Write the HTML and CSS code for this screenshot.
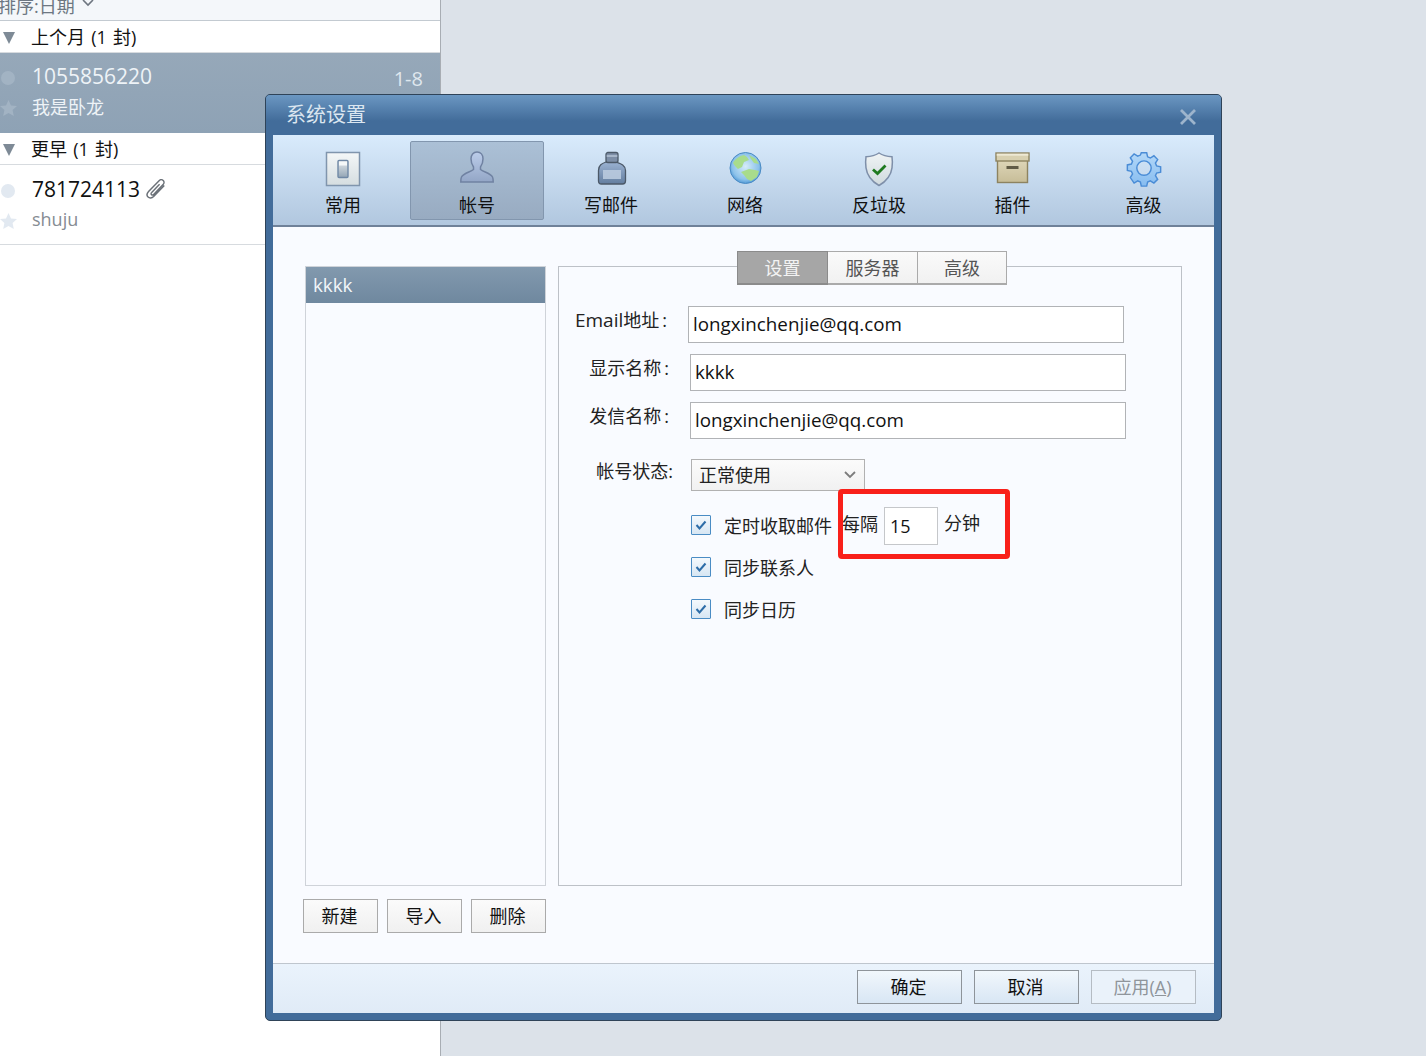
FILE: index.html
```html
<!DOCTYPE html>
<html lang="zh-CN">
<head>
<meta charset="utf-8">
<title>系统设置</title>
<link rel="stylesheet" href="styles.css">
</head>
<body>
<aside class="mail-list">
  <div class="sort-bar"><span class="sort-label">排序:日期</span><svg class="sort-chev" width="12" height="8" viewBox="0 0 12 8"><path d="M1 1l5 5 5-5" fill="none" stroke="#6e7680" stroke-width="1.6"/></svg></div>
  <div class="group"><span class="tri"></span><span>上个月 (1 封)</span></div>
  <div class="mail selected">
    <div class="mail-top"><span class="dot"></span><span class="mail-name">1055856220</span><span class="mail-date">1-8</span></div>
    <div class="mail-sub"><svg class="star" width="17" height="16" viewBox="0 0 17 16"><path d="M8.5 0l2.5 5.4 6 .7-4.400 4 1.200 5.900-5.300-3-5.300 3 1.200-5.900L0 6.100l6-.7z"/></svg><span>我是卧龙</span></div>
  </div>
  <div class="group early"><span class="tri"></span><span>更早 (1 封)</span></div>
  <div class="mail last">
    <div class="mail-top"><span class="dot"></span><span class="mail-name">781724113</span>
      <svg class="clip" width="20" height="20" viewBox="2 1.200 15.300 16.500"><path d="M16.500 6.500l-8.800 9.200c-1.500 1.500-3.500 1.500-4.600.4s-1-3 .4-4.500l8.700-9c1-1 2.500-1 3.400-.1s.9 2.300-.1 3.300l-7.800 8.100c-.6.6-1.300.6-1.800.2s-.4-1.200.2-1.800l6.500-6.800" fill="none" stroke="#6b7178" stroke-width="1.200"/></svg>
    </div>
    <div class="mail-sub"><svg class="star" width="17" height="16" viewBox="0 0 17 16"><path d="M8.500 0l2.500 5.400 6 .7-4.400 4 1.200 5.900-5.300-3-5.300 3 1.200-5.900L0 6.100l6-.7z"/></svg><span>shuju</span></div>
  </div>
</aside>

<section class="dialog">
  <header class="title-bar">
    <span class="title">系统设置</span>
    <svg class="close" width="18" height="18" viewBox="0 0 18 18"><path d="M2 2l14 14M16 2L2 16" stroke="#9db4cc" stroke-width="2.800" fill="none"/></svg>
  </header>
  <div class="dialog-body">
    <nav class="toolbar">
      <div class="tool">
        <svg width="36" height="36" viewBox="0 0 36 36"><defs><linearGradient id="g1" x1="0" y1="0" x2="0" y2="1"><stop offset="0" stop-color="#f4f7f8"/><stop offset="1" stop-color="#d5dde0"/></linearGradient><linearGradient id="g2" x1="0" y1="0" x2="0" y2="1"><stop offset="0" stop-color="#e4e9ec"/><stop offset="1" stop-color="#93a5b5"/></linearGradient></defs><rect x="1.500" y="1.500" width="33" height="33" fill="url(#g1)" stroke="#8095ad" stroke-width="1.500"/><rect x="13" y="9.500" width="10" height="17" rx="1" fill="url(#g2)" stroke="#6f88a5" stroke-width="1.400"/><rect x="14" y="10.500" width="8" height="4" fill="#f5f8f9"/></svg>
        <span>常用</span>
      </div>
      <div class="tool active">
        <svg width="36" height="36" viewBox="0 0 36 36"><defs><linearGradient id="g3" x1="0" y1="0" x2="0" y2="1"><stop offset="0" stop-color="#bccdea"/><stop offset="1" stop-color="#93a6c6"/></linearGradient></defs><path d="M18 1c3.800 0 6 3 6 6.800 0 3.500-1 6.200-2.500 8.200v2.500c3 2.500 10 3.500 12 7.500 .5 1 .7 3 .7 5H1.800c0-2 .2-4 .7-5 2-4 9-5 12-7.500V16c-1.500-2-2.500-4.700-2.500-8.200C12 4 14.200 1 18 1z" fill="url(#g3)" stroke="#7082a2" stroke-width="1.500"/></svg>
        <span>帐号</span>
      </div>
      <div class="tool">
        <svg width="36" height="36" viewBox="0 0 36 36"><defs><linearGradient id="g4" x1="0" y1="0" x2="0" y2="1"><stop offset="0" stop-color="#9bb2d2"/><stop offset="1" stop-color="#647e9f"/></linearGradient></defs><path d="M13 11h10c4 1.500 9.500 3 9.500 8.500V30c0 2-1 3-3 3H8.500c-2 0-3-1-3-3V19.500C5.500 14 9 12.500 13 11z" fill="url(#g4)" stroke="#4c5968" stroke-width="1.300"/><rect x="10" y="19" width="18" height="9" fill="#b9cade" opacity=".9"/><rect x="13" y="1.500" width="12" height="10" rx="2" fill="#7d8ea6" stroke="#4c5968" stroke-width="1.300"/><rect x="13.700" y="4" width="10.600" height="2" fill="#a7b6c9"/></svg>
        <span>写邮件</span>
      </div>
      <div class="tool">
        <svg width="36" height="36" viewBox="0 0 36 36"><defs><radialGradient id="g5" cx=".5" cy=".45" r=".6"><stop offset="0" stop-color="#d5ecfa"/><stop offset=".7" stop-color="#8dc2ea"/><stop offset="1" stop-color="#3c8bd0"/></radialGradient></defs><circle cx="18.500" cy="17" r="15.500" fill="url(#g5)" stroke="#4a8bc4" stroke-width="1"/><path d="M6 12c2-4 6-7 11-8l3 2 2 3-5 2-2 5-4 2-3-3zM22 4l7 4 3 5-5-1-3-4zM14 21l8-3 6 1 4 1-2 6-6 4-4-2-3-4z" fill="#a8dc8c"/></svg>
        <span>网络</span>
      </div>
      <div class="tool">
        <svg width="36" height="36" viewBox="0 0 36 36"><defs><linearGradient id="g6" x1="0" y1="0" x2="0" y2="1"><stop offset="0" stop-color="#f0f4f5"/><stop offset="1" stop-color="#cfd9dd"/></linearGradient></defs><path d="M18 2c3 2 7 3.500 13 3.800 .5 3 .5 7 0 11C30 24.500 24 31 18 34.500 12 31 6 24.500 5 16.800c-.5-4-.5-8 0-11C11 5.500 15 4 18 2z" fill="url(#g6)" stroke="#7e8fa9" stroke-width="1.500"/><path d="M12 18.500l4.500 4 8-8" fill="none" stroke="#1f7a1f" stroke-width="2.800"/></svg>
        <span>反垃圾</span>
      </div>
      <div class="tool tool-six">
        <svg width="36" height="36" viewBox="0 0 36 36"><defs><linearGradient id="g7" x1="0" y1="0" x2="0" y2="1"><stop offset="0" stop-color="#ded6b8"/><stop offset="1" stop-color="#c7bd98"/></linearGradient></defs><rect x="2.500" y="9" width="30" height="22.500" fill="url(#g7)" stroke="#8d8360" stroke-width="1.400"/><rect x="1" y="2" width="33" height="8" fill="#d8d0b0" stroke="#8d8360" stroke-width="1.400"/><rect x="1.700" y="2.700" width="31.600" height="2" fill="#eee9d4"/><rect x="11.500" y="15" width="12" height="3" fill="#615b45"/></svg>
        <span>插件</span>
      </div>
      <div class="tool tool-last">
        <svg width="36" height="36" viewBox="0 0 36 36"><defs><linearGradient id="g8" x1="0" y1="0" x2="0" y2="1"><stop offset="0" stop-color="#b4d8f8"/><stop offset="1" stop-color="#86bcf0"/></linearGradient></defs><path fill-rule="evenodd" d="M15 1h6l1 4.500 3 1.300 4-2.500 4.200 4.200-2.500 4 1.300 3 4.500 1v6l-4.500 1-1.300 3 2.500 4-4.200 4.200-4-2.500-3 1.300-1 4.500h-6l-1-4.500-3-1.300-4 2.500L2.800 28.500l2.500-4-1.300-3-4.500-1v-6l4.500-1 1.300-3-2.500-4L7 2.300l4 2.500 3-1.300zM18 10a8 8 0 1 0 0 16 8 8 0 0 0 0-16z" transform="translate(1.800 .9) scale(.9)" fill="url(#g8)" stroke="#4a8cd6" stroke-width="1.600"/></svg>
        <span>高级</span>
      </div>
    </nav>

    <div class="content">
      <div class="account-col">
        <div class="account-list"><div class="account-item">kkkk</div></div>
        <div class="account-actions">
          <button class="btn" type="button">新建</button>
          <button class="btn" type="button">导入</button>
          <button class="btn" type="button">删除</button>
        </div>
      </div>
      <div class="settings-pane">
        <div class="tabs">
          <div class="tab on">设置</div>
          <div class="tab mid">服务器</div>
          <div class="tab end">高级</div>
        </div>
        <div class="field f-email"><label><span class="lat">Email</span>地址<span class="colon">:</span></label><input class="text" value="longxinchenjie@qq.com" readonly></div>
        <div class="field f-name"><label>显示名称<span class="colon">:</span></label><input class="text" value="kkkk" readonly></div>
        <div class="field f-name"><label>发信名称<span class="colon">:</span></label><input class="text" value="longxinchenjie@qq.com" readonly></div>
        <div class="field f-state"><label>帐号状态:</label>
          <div class="select"><span>正常使用</span><svg width="12" height="8" viewBox="0 0 12 8"><path d="M1 1l5 5 5-5" fill="none" stroke="#7c7c7c" stroke-width="1.800"/></svg></div>
        </div>
        <div class="check first">
          <span class="box"><svg width="16" height="16" viewBox="0 0 16 16"><path d="M3.500 8l3 3.500 6-7" fill="none" stroke="#2d6da8" stroke-width="2"/></svg></span>
          <span class="check-text">定时收取邮件</span><span class="every">每隔</span><input class="mins" value="15" readonly><span class="unit">分钟</span>
        </div>
        <div class="check">
          <span class="box"><svg width="16" height="16" viewBox="0 0 16 16"><path d="M3.500 8l3 3.500 6-7" fill="none" stroke="#2d6da8" stroke-width="2"/></svg></span>
          <span class="check-text">同步联系人</span>
        </div>
        <div class="check">
          <span class="box"><svg width="16" height="16" viewBox="0 0 16 16"><path d="M3.500 8l3 3.500 6-7" fill="none" stroke="#2d6da8" stroke-width="2"/></svg></span>
          <span class="check-text">同步日历</span>
        </div>
        <div class="highlight"></div>
      </div>
    </div>

    <footer class="footer">
      <button class="fbtn" type="button">确定</button>
      <button class="fbtn" type="button">取消</button>
      <button class="fbtn off" type="button">应用(<u>A</u>)</button>
    </footer>
  </div>
</section>
</body>
</html>
```
FILE: styles.css
```css
* { box-sizing: border-box; }
html, body { margin: 0; height: 100%; }
body {
  background: #dce2e9;
  font-family: "Open Sans", "Noto Sans CJK SC", sans-serif;
  font-size: 18px;
  color: #111;
  overflow: hidden;
  position: relative;
  height: 1056px;
}
.mail-list {
  width: 441px;
  height: 1056px;
  background: #fff;
  border-right: 1px solid #a8adb3;
  overflow: hidden;
}
.sort-bar {
  height: 21px;
  background: #f4f7fa;
  border-bottom: 1px solid #c3cad1;
  display: flex;
  align-items: flex-end;
  color: #6d7782;
  font-size: 18px;
  line-height: 24px;
  overflow: hidden;
}
.sort-label { margin-left: -2px; white-space: nowrap; margin-bottom: 2px; }
.sort-chev { margin: 0 0 13px 7px; }
.group {
  height: 32px;
  display: flex;
  align-items: center;
  padding-bottom: 2px;
  border-bottom: 1px solid #d7dbdf;
  font-size: 18px;
  word-spacing: 1.500px;
}
.tri {
  width: 0; height: 0;
  margin: 4px 16px 0 3px;
  border-left: 6.500px solid transparent;
  border-right: 6.500px solid transparent;
  border-top: 12px solid #7e8a96;
}
.mail { height: 80px; padding-top: 7px; }
.mail.selected { background: linear-gradient(#96a8b9, #8ea2b5); color: #eef3f7; }
.mail.last { padding-top: 8px; border-bottom: 1px solid #d7dbdf; }
.mail-top { display: flex; align-items: center; height: 32px; }
.dot {
  width: 14px; height: 14px;
  margin: 4px 17px 0 1px;
  border-radius: 50%;
  background: #e2e9f1;
}
.selected .dot { background: #a2b3c3; }
.mail-name { font-size: 21px; }
.mail-date { margin-left: auto; margin-right: 17px; font-size: 20px; color: #dfe7ee; padding-top: 5px; }
.clip { margin-left: 6px; }
.mail-sub { display: flex; align-items: center; height: 30px; margin-top: -1px; }
.star { margin: 4px 15px 0 0; fill: #e2e9f1; flex: none; }
.selected .star { fill: #a2b3c3; }
.last .mail-sub { color: #868c93; }

.dialog {
  position: absolute;
  left: 265px; top: 94px;
  width: 957px; height: 927px;
  background: #426c9a;
  border: 1px solid #2f4358;
  border-radius: 5px;
  display: flex;
  flex-direction: column;
  padding: 0 7px 7px;
}
.title-bar {
  height: 40px;
  margin: 0 -7px;
  padding: 0 24px 0 20px;
  background: linear-gradient(#6b97c2 0, #426c9a 65%);
  border-radius: 4px 4px 0 0;
  display: flex;
  align-items: center;
  justify-content: space-between;
}
.title { color: #dbe6f0; font-size: 20px; margin-top: -4px; }
.close { margin-top: 4px; }
.dialog-body { flex: 1; display: flex; flex-direction: column; background: #f9fbff; min-height: 0; }
.toolbar {
  height: 92px;
  padding: 6px 3px 0;
  display: flex;
  background: linear-gradient(#d9ebfc, #b1c7df);
  border-bottom: 2px solid #6f8199;
  flex: none;
}
.tool {
  width: 134px;
  height: 79px;
  display: flex;
  flex-direction: column;
  align-items: center;
  padding-top: 9px;
  gap: 6px;
  line-height: 24px;
  border: 1px solid transparent;
  border-radius: 2px;
  font-size: 18px;
}
.tool-six { width: 133px; }
.tool-last { width: 129px; }
.tool svg { display: block; }
.tool.active { background: linear-gradient(#abc0d6, #98abc1); border-color: #8296ae; }
.content { flex: 1; display: flex; padding: 39px 32px 0 30px; gap: 12px; min-height: 0; }
.account-col { width: 243px; display: flex; flex-direction: column; }
.account-list {
  height: 620px;
  margin-left: 2px;
  background: #f9fbff;
  border: 1px solid #cfd3d9;
}
.account-item {
  height: 36px;
  background: linear-gradient(#8299ae, #6f889f);
  color: #f2f6f9;
  padding-left: 7px;
  line-height: 36px;
  font-size: 18.800px;
}
.account-actions { display: flex; gap: 9px; margin-top: 13px; }
.btn {
  width: 75px; height: 34px;
  padding: 0 2px 2px 0;
  background: linear-gradient(#fbfbfb, #f0f0f0);
  border: 1px solid #aaa;
  font: inherit;
  color: #111;
}
.settings-pane {
  flex: 1;
  height: 620px;
  position: relative;
  border: 1px solid #bdc1c7;
}
.tabs {
  display: flex;
  width: 270px;
  height: 34px;
  margin: -16px 0 0 178px;
  position: relative;
}
.tab {
  width: 90px;
  background: linear-gradient(#fafafa, #f1f1f1);
  border: 1px solid #aaa;
  border-left: 0;
  border-bottom: 2px solid #aaa;
  text-align: center;
  color: #555;
  line-height: 32px;
  font-size: 18px;
}
.tab.on { width: 91px; background: #a6a6a6; color: #f3f3f3; border: 1px solid #8b8b8b; border-bottom: 2px solid #8b8b8b; }
.tab.end { width: 89px; }
.field { display: flex; align-items: flex-start; color: #222; }
.field label { white-space: nowrap; text-align: right; line-height: 28px; }
.lat { font-size: 19px; }
.colon { margin-left: 3px; }
.text {
  width: 436px; height: 37px;
  padding: 0 4px 2px;
  background: #fff;
  border: 1px solid #b1b3b6;
  font: inherit;
  font-size: 18.800px;
  color: #111;
  outline: 0;
}
.f-email { margin-top: 21px; }
.f-email label { width: 108px; margin-right: 21px; }
.f-name { margin-top: 11px; }
.f-name label { width: 110px; margin-right: 21px; }
.f-state { margin-top: 20px; }
.f-state label { width: 114px; margin: -2px 18px 0 0; }
.select {
  width: 174px; height: 32px;
  padding: 0 8px 2px 7px;
  display: flex;
  align-items: center;
  justify-content: space-between;
  background: linear-gradient(#fbfbfb, #f1f1f1);
  border: 1px solid #b1b1b1;
}
.select svg { margin-top: 2px; }
.check { display: flex; align-items: center; height: 42px; margin-left: 132px; color: #222; }
.check.first { margin-top: 13px; }
.box {
  width: 20px; height: 20px;
  margin-right: 13px;
  display: flex;
  align-items: center;
  justify-content: center;
  background: linear-gradient(#f4f9fd, #d7e6f3);
  border: 1px solid #4a8cc4;
  border-radius: 1px;
}
.every { margin-left: 10px; margin-top: -4px; }
.mins {
  width: 54px; height: 38px;
  margin: 2px 0 0 6px;
  padding: 0 5px;
  background: #fff;
  border: 1px solid #c5c7ca;
  font: inherit;
  color: #111;
  outline: 0;
}
.unit { margin-left: 6px; margin-top: -6px; }
.highlight {
  position: absolute;
  left: 279px; top: 222px;
  width: 172px; height: 70px;
  border: 5px solid #f9201a;
  border-radius: 4px;
}
.footer {
  height: 50px;
  flex: none;
  display: flex;
  justify-content: flex-end;
  gap: 12px;
  padding: 6px 18px 0 0;
  background: linear-gradient(#eaf3fc, #e0ebf7);
  border-top: 1px solid #bfc6ce;
}
.fbtn {
  width: 105px; height: 34px;
  padding: 0 2px 2px 0;
  background: linear-gradient(#f1f7fc, #d8e6f4);
  border: 1px solid #8e949a;
  font: inherit;
  color: #111;
}
.fbtn.off { background: #eaf2fa; border-color: #b5bcc3; color: #8f959b; }
```
